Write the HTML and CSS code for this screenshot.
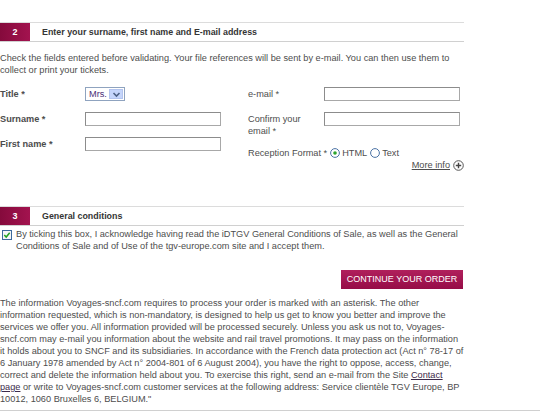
FILE: index.html
```html
<!DOCTYPE html>
<html lang="en">
<head>
<meta charset="utf-8">
<title>Order</title>
<link rel="stylesheet" href="styles.css">
</head>
<body>
<div class="page">
  <section class="step">
    <div class="step-head"><span class="step-num">2</span><h2 class="step-title">Enter your surname, first name and E-mail address</h2></div>
    <p class="intro">Check the fields entered before validating. Your file references will be sent by e-mail. You can then use them to collect or print your tickets.</p>
    <div class="form">
      <div class="col col-left">
        <div class="field"><label class="lbl lbl-b">Title *</label><div class="select"><span class="select-val">Mrs.</span><span class="select-btn"><svg width="9" height="7" viewBox="0 0 9 7"><path d="M1.5 2 L4.5 5 L7.5 2" fill="none" stroke="#4d6185" stroke-width="1.6"/></svg></span></div></div>
        <div class="field"><label class="lbl lbl-b">Surname *</label><input class="text" type="text"></div>
        <div class="field"><label class="lbl lbl-b">First name *</label><input class="text" type="text"></div>
      </div>
      <div class="col col-right">
        <div class="field"><label class="lbl">e-mail *</label><input class="text" type="text"></div>
        <div class="field field-confirm"><label class="lbl">Confirm your<br>email *</label><input class="text" type="text"></div>
        <div class="reception"><span class="rec-label">Reception Format *</span><span class="radio"><svg width="10" height="10" viewBox="0 0 10 10"><circle cx="5" cy="5" r="4.4" fill="#fff" stroke="#4a72a4" stroke-width="1"/><circle cx="5" cy="5" r="1.8" fill="#2ea52e"/></svg></span><span class="opt">HTML</span><span class="radio"><svg width="10" height="10" viewBox="0 0 10 10"><circle cx="5" cy="5" r="4.4" fill="#fff" stroke="#4a72a4" stroke-width="1"/></svg></span><span class="opt">Text</span></div>
        <div class="more"><a href="#" class="more-link">More info</a><svg class="plus" width="11" height="11" viewBox="0 0 11 11"><circle cx="5.5" cy="5.5" r="4.8" fill="#fff" stroke="#555" stroke-width="1"/><path d="M5.5 2.8 V8.2 M2.8 5.5 H8.2" stroke="#444" stroke-width="1.4"/></svg></div>
      </div>
    </div>
  </section>
  <section class="step step-3">
    <div class="step-head"><span class="step-num">3</span><h2 class="step-title">General conditions</h2></div>
    <div class="accept">
      <span class="check"><svg width="10" height="10" viewBox="0 0 10 10"><rect x="0.5" y="0.5" width="9" height="9" fill="#f4f6f8" stroke="#3d6a9d"/><path d="M2.3 5 L4.2 7 L7.7 2.8" fill="none" stroke="#21a121" stroke-width="1.5"/></svg></span>
      <p class="accept-text">By ticking this box, I acknowledge having read the iDTGV General Conditions of Sale, as well as the General Conditions of Sale and of Use of the tgv-europe.com site and I accept them.</p>
    </div>
    <div class="actions"><button class="btn" type="button">CONTINUE YOUR ORDER</button></div>
  </section>
</div>
<footer class="legal">
  <p class="legal-text">The information Voyages-sncf.com requires to process your order is marked with an asterisk. The other information requested, which is non-mandatory, is designed to help us get to know you better and improve the services we offer you. All information provided will be processed securely. Unless you ask us not to, Voyages-sncf.com may e-mail you information about the website and rail travel promotions. It may pass on the information it holds about you to SNCF and its subsidiaries. In accordance with the French data protection act (Act n° 78-17 of 6 January 1978 amended by Act n° 2004-801 of 6 August 2004), you have the right to oppose, access, change, correct and delete the information held about you. To exercise this right, send an e-mail from the Site <a href="#" class="contact">Contact</a> <a href="#" class="contact">page</a> or write to Voyages-sncf.com customer services at the following address: Service clientèle TGV Europe, BP 10012, 1060 Bruxelles 6, BELGIUM."</p>
</footer>
</body>
</html>
```

FILE: styles.css
```css
body {
  margin: 0;
  background: #fff;
  color: #4d4d4d;
  font-family: "Liberation Sans", Arial, sans-serif;
  font-size: 9.2px;
  line-height: 12px;
}

.page {
  width: 464px;
  padding-top: 22px;
}

.step-head {
  display: flex;
  align-items: stretch;
  height: 18px;
  border-top: 1px solid #dcdcdc;
  border-bottom: 1px solid #d0d0d0;
}

.step-num {
  width: 30px;
  flex: none;
  display: flex;
  align-items: center;
  justify-content: center;
  background: linear-gradient(90deg, #850a3c, #a3134f);
  color: #fff;
  font-weight: bold;
  font-size: 9px;
}

.step-title {
  margin: 0 0 0 12px;
  font-size: 8.9px;
  line-height: 18px;
  font-weight: bold;
  color: #353535;
}

.intro {
  margin: 10px 0 0;
}

.form {
  display: flex;
  margin-top: 11px;
}

.col {
  display: flex;
  flex-direction: column;
}

.col-left {
  width: 221px;
  gap: 11px;
}

.col-right {
  margin-left: 27px;
  flex: 1;
}

.field {
  display: flex;
  align-items: flex-start;
}

.lbl {
  flex: none;
  line-height: 12px;
  padding-top: 1px;
}

.col-left .lbl {
  width: 85px;
}

.col-right .lbl {
  width: 76px;
}

.lbl-b {
  font-weight: bold;
}

.text {
  width: 136px;
  height: 14px;
  box-sizing: border-box;
  margin: 0;
  padding: 0;
  border: 1px solid #8c8c8c;
  border-right-color: #a8a8a8;
  border-bottom-color: #a8a8a8;
  background: #fff;
  font: inherit;
}

.select {
  width: 40px;
  height: 14px;
  box-sizing: border-box;
  border: 1px solid #8fa3bf;
  display: flex;
  align-items: center;
  justify-content: space-between;
  background: #fff;
}

.select-val {
  padding-left: 3px;
  color: #4b2f78;
  line-height: 12px;
}

.select-btn {
  width: 14px;
  height: 10px;
  margin-right: 1px;
  display: flex;
  align-items: center;
  justify-content: center;
  background: #c5d5fb;
  border: 1px solid #b3c4ef;
  box-sizing: border-box;
}

.field-confirm {
  margin-top: 11px;
}

.reception {
  margin-top: 10px;
  display: flex;
  align-items: center;
}

.rec-label {
  margin-right: 3px;
}

.radio {
  display: inline-flex;
  width: 10px;
  height: 10px;
  margin-right: 2px;
}

.opt {
  margin-right: 3px;
}

.more {
  display: flex;
  justify-content: flex-end;
  align-items: center;
  gap: 3px;
  margin-top: 0;
}

.more-link {
  color: #4d4d4d;
  text-decoration: underline;
}

.plus {
  display: block;
}

.step-3 {
  margin-top: 35px;
}

.accept {
  display: flex;
  margin-top: 2px;
}

.check {
  flex: none;
  width: 10px;
  height: 10px;
  margin: 2px 4px 0 2px;
  display: flex;
}

.accept-text {
  margin: 0;
}

.actions {
  display: flex;
  justify-content: flex-end;
  margin-top: 18px;
}

.btn {
  width: 122px;
  height: 19px;
  margin: 0 1px 0 0;
  padding: 0;
  border: 0;
  background: linear-gradient(#b0205c, #960c47);
  color: #fff;
  font-family: "Liberation Sans", Arial, sans-serif;
  font-size: 9px;
  line-height: 19px;
}

.legal {
  margin-top: 8px;
  padding-bottom: 5px;
  border-bottom: 1px solid #d0d0d0;
}

.legal-text {
  width: 464px;
  margin: 0;
}

.contact {
  color: #3c2a4a;
  text-decoration: underline;
}
```
